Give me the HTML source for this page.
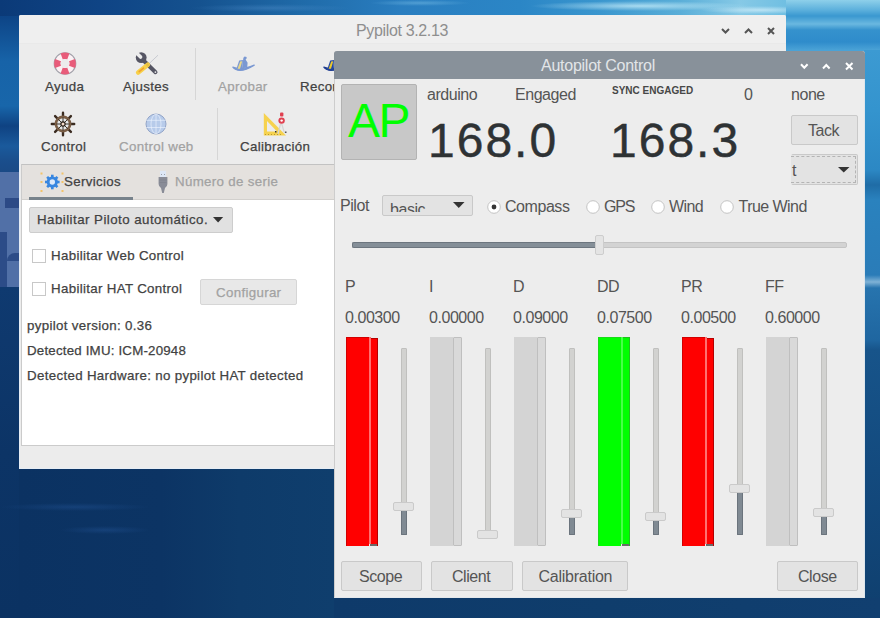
<!DOCTYPE html>
<html><head><meta charset="utf-8">
<style>
html,body{margin:0;padding:0;}
body{width:880px;height:618px;overflow:hidden;position:relative;font-family:"Liberation Sans",sans-serif;
background:#0e3868;}
.a{position:absolute;}
.t{position:absolute;white-space:nowrap;line-height:1;}
.bt{font-size:13.3px;letter-spacing:0.33px;color:#424242;-webkit-text-stroke:0.25px currentColor;}
.ft{font-size:16px;letter-spacing:-0.45px;color:#555555;}
.gray{color:#a2a2a2;}
svg{position:absolute;overflow:visible;}
.btn{position:absolute;box-sizing:border-box;border:1px solid #c9c9c9;background:#e3e3e3;border-radius:2px;}
</style></head><body>

<!-- background wallpaper -->
<div class="a" style="left:0;top:0;width:880px;height:618px;background:linear-gradient(180deg,#0f4078 0px,#113f74 300px,#0d3566 470px,#0c3262 618px);"></div>
<div class="a" style="left:0;top:0;width:880px;height:16px;background:linear-gradient(90deg,#0b3a78 0px,#0f4485 100px,#15528f 200px,#1f6aa8 300px,#2a7ec0 400px,#2b86c6 520px,#3a96ce 600px,#5aaed8 680px,#86c9e6 740px,#70bfe2 786px,#4aa4d6 880px);"></div>
<div class="a" style="left:0;top:0;width:880px;height:16px;background:radial-gradient(ellipse 110px 5px at 640px 6px,rgba(200,238,250,0.75),rgba(200,238,250,0)),radial-gradient(ellipse 60px 4px at 760px 10px,rgba(230,248,255,0.6),rgba(230,248,255,0)),radial-gradient(ellipse 80px 4px at 270px 8px,rgba(90,150,210,0.35),rgba(90,150,210,0)),radial-gradient(ellipse 50px 3px at 420px 3px,rgba(120,190,230,0.5),rgba(120,190,230,0));"></div>
<div class="a" style="left:786px;top:0;width:94px;height:52px;background:linear-gradient(180deg,#8ed0ea 0px,#5cb0dc 10px,#3a98d0 16px,#6ab8e0 24px,#3592cd 30px,#2f8ccb 42px,#4aa2d6 50px);"></div>
<div class="a" style="left:864px;top:50px;width:16px;height:568px;background:linear-gradient(180deg,#3c9ad2 0px,#3494ce 60px,#2c88c4 120px,#1f6ca6 135px,#2a82be 150px,#2a7cb8 225px,#7fb2d6 232px,#2774ae 238px,#1f66a0 290px,#17548a 300px,#134a7e 420px,#0f3f6e 568px);"></div>
<div class="a" style="left:0;top:16px;width:19px;height:602px;background:linear-gradient(180deg,#0d4486 0px,#1763a8 45px,#1866aa 90px,#0f4282 110px,#1a5a9c 130px,#1a4e8c 145px,#1a4a86 156px,#1a4a86 600px);"></div>
<div class="a" style="left:0;top:172px;width:19px;height:115px;background:#5170a7;"></div>
<div class="a" style="left:5px;top:198px;width:14px;height:10px;background:#2c4a86;"></div>
<div class="a" style="left:0;top:232px;width:7px;height:55px;background:#2c4c88;"></div>
<div class="a" style="left:7px;top:253px;width:12px;height:8px;background:#2c4c88;border-radius:8px 0 0 0;"></div>
<div class="a" style="left:0;top:287px;width:19px;height:331px;background:linear-gradient(180deg,#0f3a70 0%,#0c3466 50%,#0b3262 100%);"></div>
<div class="a" style="left:19px;top:468px;width:315px;height:150px;background:linear-gradient(90deg,#0b3262 0%,#0c3464 45%,#0e3b6a 70%,#0f3e6d 100%);"></div>
<div class="a" style="left:0;top:503px;width:150px;height:8px;background:radial-gradient(ellipse 75px 4px at 75px 4px,rgba(40,90,160,0.35),rgba(40,90,160,0));"></div>
<div class="a" style="left:60px;top:526px;width:90px;height:8px;background:radial-gradient(ellipse 45px 4px at 45px 4px,rgba(40,90,160,0.35),rgba(40,90,160,0));"></div>
<div class="a" style="left:334px;top:598px;width:546px;height:20px;background:linear-gradient(90deg,#0e3a6a 0%,#0f3d6c 50%,#113f70 100%);"></div>

<!-- ================= BACK WINDOW ================= -->
<div class="a" id="bw" style="left:19px;top:15px;width:767px;height:454px;box-sizing:border-box;background:#ececec;border-left:1px solid #e6edf5;border-bottom:1px solid #e6edf5;border-radius:2px 2px 0 0;"></div>
<div class="a" style="left:19px;top:15px;width:767px;height:28px;background:#efefef;border-radius:2px 2px 0 0;"></div>
<div class="a" style="left:19px;top:43px;width:767px;height:1px;background:#e9e9e9;"></div>
<div class="t" style="left:356px;top:22.5px;font-size:16px;letter-spacing:-0.35px;color:#8e8e8e;">Pypilot 3.2.13</div>
<!-- back title buttons -->
<svg style="left:721px;top:28px" width="9" height="6"><path d="M1 1 L4.5 4.5 L8 1" fill="none" stroke="#555" stroke-width="2"/></svg>
<svg style="left:744px;top:28px" width="9" height="6"><path d="M1 5 L4.5 1.5 L8 5" fill="none" stroke="#555" stroke-width="2"/></svg>
<svg style="left:767px;top:27px" width="8" height="8"><path d="M1 1 L7 7 M7 1 L1 7" fill="none" stroke="#555" stroke-width="2"/></svg>

<!-- toolbar row 1 -->
<svg style="left:53px;top:51px" width="24" height="25" viewBox="0 0 24 25">
 <circle cx="12" cy="12.5" r="10.8" fill="#fcf1f4" stroke="#a2a2aa" stroke-width="1.1"/>
 <g fill="#e85c7a">
  <path d="M7.6 2.6 A10.6 10.6 0 0 1 16.4 2.6 L14.2 8.5 A4.6 4.6 0 0 0 9.8 8.5 Z"/>
  <path d="M21.9 8.1 A10.6 10.6 0 0 1 21.9 16.9 L16 14.7 A4.6 4.6 0 0 0 16 10.3 Z"/>
  <path d="M16.4 22.4 A10.6 10.6 0 0 1 7.6 22.4 L9.8 16.5 A4.6 4.6 0 0 0 14.2 16.5 Z"/>
  <path d="M2.1 16.9 A10.6 10.6 0 0 1 2.1 8.1 L8 10.3 A4.6 4.6 0 0 0 8 14.7 Z"/>
 </g>
 <circle cx="12" cy="12.5" r="4.4" fill="#ececec"/>
</svg>
<div class="t bt" style="left:45px;top:80px;">Ayuda</div>

<svg style="left:135px;top:52px" width="24" height="23" viewBox="0 0 24 23">
 <path d="M13.4 12.3 L23 3.2" stroke="#c4c6ce" stroke-width="0.9"/>
 <path d="M8 8 L20.5 20.2" stroke="#555563" stroke-width="4" stroke-linecap="round"/>
 <circle cx="6.2" cy="5.6" r="5.4" fill="#555563"/>
 <path d="M5.6 5 L1 0.4" stroke="#ececec" stroke-width="3.6" stroke-linecap="round"/>
 <circle cx="20.4" cy="20.1" r="0.9" fill="#ececec"/>
 <path d="M3.2 20.5 L12.8 12.8" stroke="#f8d048" stroke-width="4.6" stroke-linecap="round"/>
 <path d="M4.2 19.6 L8.5 16.2" stroke="#f0a030" stroke-width="1.6" stroke-linecap="round"/>
 <path d="M11.5 13.8 L13.6 12" stroke="#e8c040" stroke-width="3"/>
</svg>
<div class="t bt" style="left:123px;top:80px;">Ajustes</div>

<div class="a" style="left:195px;top:48px;width:1px;height:52px;background:#d6d6d6;"></div>

<svg style="left:232px;top:55.5px" width="23" height="17" viewBox="0 0 23 17">
 <path d="M0.8 11.2 Q7 18.5 22.2 9.2 Q9 14.8 0.8 11.2 Z" fill="#7a98d2" stroke="#7a98d2" stroke-width="1.3" stroke-linejoin="round"/>
 <path d="M4.2 13.4 L7.2 4.6 L11 4 L10.2 13 Z" fill="#7a98d2"/>
 <path d="M5.6 12.8 L8.2 5.4 L10.2 5.3 L8 12.8 Z" fill="#ead88a"/>
 <path d="M10 12.5 L11 5 L11.4 1.8 L12.6 0.6 L14.6 1 L14.6 2.6 L13.6 3.6 L15.6 6.8 L15.2 11.2 Z" fill="#7a98d2"/>
</svg>
<div class="t bt gray" style="left:218px;top:80px;">Aprobar</div>

<svg style="left:322.5px;top:55.5px" width="23" height="17" viewBox="0 0 23 17">
 <path d="M0.8 11.2 Q7 18.5 22.2 9.2 Q9 14.8 0.8 11.2 Z" fill="#2448a0" stroke="#1e3c90" stroke-width="1.3" stroke-linejoin="round"/>
 <path d="M4.2 13.4 L7.2 4.6 L11 4 L10.2 13 Z" fill="#2448a0"/>
 <path d="M5.6 12.8 L8.2 5.4 L10.2 5.3 L8 12.8 Z" fill="#ecc82c"/>
 <path d="M10 12.5 L11 5 L11.4 1.8 L12.6 0.6 L14.6 1 L14.6 2.6 L13.6 3.6 L15.6 6.8 L15.2 11.2 Z" fill="#2a52aa"/>
</svg>
<div class="t bt" style="left:300px;top:80px;">Recordar</div>

<!-- toolbar row 2 -->
<svg style="left:51px;top:112px" width="24" height="24" viewBox="0 0 24 24">
 <g stroke="#3a2b20" stroke-width="2.4" stroke-linecap="round">
  <path d="M12 0.8 L12 4 M12 20 L12 23.2 M0.8 12 L4 12 M20 12 L23.2 12 M4.1 4.1 L6.3 6.3 M17.7 17.7 L19.9 19.9 M19.9 4.1 L17.7 6.3 M6.3 17.7 L4.1 19.9"/>
 </g>
 <circle cx="12" cy="12" r="7.1" fill="#e4e8ea" stroke="#7a5e46" stroke-width="2.6"/>
 <g stroke="#2a2118" stroke-width="0.9"><path d="M12 5.5 L12 18.5 M5.5 12 L18.5 12 M7.4 7.4 L16.6 16.6 M16.6 7.4 L7.4 16.6"/></g>
 <circle cx="12" cy="12" r="2.1" fill="#f4dccc" stroke="#2a2118" stroke-width="1.2"/>
</svg>
<div class="t bt" style="left:41px;top:140px;">Control</div>

<svg style="left:145px;top:113px" width="22" height="22" viewBox="0 0 22 22">
 <circle cx="11" cy="11" r="10" fill="#b7cbea" stroke="#93a5c8" stroke-width="1"/>
 <g stroke="#eef4ff" stroke-opacity="0.8" stroke-width="0.8" fill="none">
  <path d="M1.2 7.3 L20.8 7.3 M1.2 14.5 L20.8 14.5"/>
  <ellipse cx="11" cy="11" rx="5" ry="9.8"/>
  <path d="M11 1 L11 21"/>
 </g>
</svg>
<div class="t bt gray" style="left:119px;top:140px;">Control web</div>

<div class="a" style="left:217px;top:108px;width:1px;height:52px;background:#d6d6d6;"></div>

<svg style="left:263px;top:112px" width="24" height="24" viewBox="0 0 24 24">
 <path d="M0.8 1 L0.8 23.5 L23 23.5 Z" fill="#f6d24e"/>
 <path d="M4 9 L4 19.5 L14 19.5 Z" fill="#ececec"/>
 <g fill="#b89a30"><rect x="2" y="22" width="1" height="1"/><rect x="5" y="22" width="1" height="1"/><rect x="8" y="22" width="1" height="1"/><rect x="11" y="22" width="1" height="1"/><rect x="14" y="22" width="1" height="1"/><rect x="17" y="22" width="1" height="1"/></g>
 <path d="M17.6 11.5 L15 22 M18.6 11.5 L21.5 21" stroke="#d4d4d4" stroke-width="1.2"/>
 <rect x="17" y="0.5" width="3.4" height="4" rx="1" fill="#e04050"/>
 <circle cx="18.6" cy="8.6" r="3.2" fill="#e04050"/>
 <circle cx="18.6" cy="8.6" r="1.2" fill="#fff"/>
 <rect x="12" y="19" width="1.5" height="1.5" fill="#333"/>
 <rect x="22" y="19.5" width="1.5" height="1.5" fill="#555"/>
</svg>
<div class="t bt" style="left:240px;top:140px;">Calibración</div>

<!-- notebook -->
<div class="a" style="left:21px;top:164px;width:320px;height:282px;box-sizing:border-box;border:1px solid #cbcbcb;border-top-color:#c2c2c2;background:#fff;"></div>
<div class="a" style="left:22px;top:165px;width:320px;height:34px;background:#e4e1de;border-bottom:1px solid #d2d0cd;"></div>
<div class="a" style="left:29px;top:197px;width:104px;height:3px;background:#77828b;"></div>
<svg style="left:40px;top:171px" width="24" height="22" viewBox="0 0 24 22">
 <g fill="#f2c36a"><rect x="0.5" y="1.5" width="2" height="2"/><rect x="21.5" y="1.5" width="2" height="2"/><rect x="0.5" y="10" width="2" height="2"/><rect x="21.5" y="10" width="2" height="2"/><rect x="0.5" y="19" width="2" height="2"/><rect x="21.5" y="19" width="2" height="2"/></g>
 <g transform="translate(12.3 11)">
  <g fill="#3786e0">
   <circle r="5.6"/>
   <rect x="-1.3" y="-7.3" width="2.6" height="3"/>
   <rect x="-1.3" y="4.3" width="2.6" height="3"/>
   <rect x="-7.3" y="-1.3" width="3" height="2.6"/>
   <rect x="4.3" y="-1.3" width="3" height="2.6"/>
   <g transform="rotate(45)"><rect x="-1.3" y="-7.3" width="2.6" height="3"/><rect x="-1.3" y="4.3" width="2.6" height="3"/><rect x="-7.3" y="-1.3" width="3" height="2.6"/><rect x="4.3" y="-1.3" width="3" height="2.6"/></g>
  </g>
  <circle r="2.7" fill="#dce9fa"/>
 </g>
</svg>
<div class="t bt" style="left:64px;top:175px;">Servicios</div>
<svg style="left:158px;top:170px" width="10" height="24" viewBox="0 0 10 24">
 <rect x="2" y="0.8" width="6" height="6.2" fill="#dde7f6"/>
 <rect x="3" y="4" width="1" height="1" fill="#9aa0aa"/><rect x="6" y="4" width="1" height="1" fill="#9aa0aa"/>
 <path d="M0.6 7 L9.4 7 L9.4 14 Q9.4 16.5 7 18 L5.8 23 L4.2 23 L3 18 Q0.6 16.5 0.6 14 Z" fill="#898c97"/>
 <path d="M1.5 10 L8.5 10 M1.5 12.5 L8.5 12.5" stroke="#7c7f8a" stroke-width="0.6"/>
</svg>
<div class="t bt gray" style="left:175px;top:175px;">Número de serie</div>

<div class="btn" style="left:29px;top:207px;width:204px;height:26px;border-color:#cdcdcd;background:#e1e1e1;"></div>
<div class="t bt" style="left:37px;top:213px;letter-spacing:0.46px;">Habilitar Piloto automático.</div>
<svg style="left:213.4px;top:216.8px" width="11" height="7"><path d="M0 0 L10.2 0 L5.1 5.6 Z" fill="#333"/></svg>

<div class="a" style="left:32px;top:249px;width:14px;height:14px;box-sizing:border-box;border:1px solid #c8c8c8;background:#fff;"></div>
<div class="t bt" style="left:51px;top:249px;">Habilitar Web Control</div>
<div class="a" style="left:32px;top:282px;width:14px;height:14px;box-sizing:border-box;border:1px solid #c8c8c8;background:#fff;"></div>
<div class="t bt" style="left:51px;top:282px;">Habilitar HAT Control</div>
<div class="btn" style="left:200px;top:279px;width:97px;height:26px;border-color:#d6d6d6;background:#e8e8e8;"></div>
<div class="t bt gray" style="left:216px;top:286px;">Configurar</div>

<div class="t bt" style="left:27px;top:318.5px;">pypilot version: 0.36</div>
<div class="t bt" style="left:27px;top:343.5px;letter-spacing:0.2px;">Detected IMU: ICM-20948</div>
<div class="t bt" style="left:27px;top:369px;">Detected Hardware: no pypilot HAT detected</div>

<!-- ================= FRONT WINDOW ================= -->
<div class="a" id="fw" style="left:334px;top:51px;width:531px;height:547px;box-sizing:border-box;background:#ededed;border-left:1px solid #cdcdcd;border-right:1px solid #dde6ec;border-bottom:1px solid #e4e8ec;border-radius:3px 3px 0 0;"></div>
<div class="a" style="left:334px;top:51px;width:531px;height:28px;background:#88919a;border-radius:3px 3px 0 0;"></div>
<div class="t" style="left:541px;top:58px;font-size:16px;letter-spacing:-0.25px;color:#e2e5e8;">Autopilot Control</div>
<svg style="left:800px;top:63px" width="9" height="7"><path d="M1 1.2 L4.3 4.8 L7.6 1.2" fill="none" stroke="#fff" stroke-width="2"/></svg>
<svg style="left:822px;top:63px" width="9" height="7"><path d="M1 5.5 L4.3 2 L7.6 5.5" fill="none" stroke="#fff" stroke-width="2"/></svg>
<svg style="left:845px;top:62px" width="9" height="8"><path d="M1 1 L7.5 7.5 M7.5 1 L1 7.5" fill="none" stroke="#fff" stroke-width="2"/></svg>

<div class="a" style="left:341px;top:84px;width:76px;height:75.5px;box-sizing:border-box;border:1px solid #b3b3b3;background:#c8c8c8;border-radius:2px;"></div>
<div class="t" style="left:348px;top:96.5px;font-size:48px;letter-spacing:-1.5px;color:#00ff00;">AP</div>

<div class="t ft" style="left:427px;top:86.5px;">arduino</div>
<div class="t ft" style="left:515px;top:86.5px;">Engaged</div>
<div class="t" style="left:612px;top:86px;font-size:10px;font-weight:bold;color:#474747;">SYNC ENGAGED</div>
<div class="t ft" style="left:744px;top:87px;">0</div>
<div class="t ft" style="left:791px;top:87px;">none</div>

<div class="t" style="left:428px;top:117px;font-size:48px;letter-spacing:2px;color:#2e3234;-webkit-text-stroke:0.45px #2e3234;">168.0</div>
<div class="t" style="left:610px;top:117px;font-size:48px;letter-spacing:2px;color:#2e3234;-webkit-text-stroke:0.45px #2e3234;">168.3</div>

<div class="btn" style="left:791px;top:115px;width:67px;height:30px;"></div>
<div class="t ft" style="left:808px;top:122.5px;">Tack</div>
<div class="btn" style="left:791px;top:154px;width:67px;height:31px;border-left-color:#e3e3e3;"></div><div class="a" style="left:791px;top:156px;width:65px;height:27px;box-sizing:border-box;border-top:1px dashed #b4b4b4;border-bottom:1px dashed #b4b4b4;border-right:1px dashed #b4b4b4;"></div>
<div class="t ft" style="left:792px;top:163px;">t</div>
<svg style="left:838px;top:167px" width="12" height="6"><path d="M0 0 L11.5 0 L5.75 5.5 Z" fill="#333"/></svg>

<div class="t ft" style="left:340px;top:198px;">Pilot</div>
<div class="btn" style="left:382px;top:194.5px;width:91px;height:21px;"></div><div class="a" style="left:383px;top:196px;width:70px;height:16px;overflow:hidden;"><div class="t ft" style="left:7px;top:5.5px;">basic</div></div>
<svg style="left:453px;top:202px" width="12" height="7"><path d="M0 0 L11.5 0 L5.75 6 Z" fill="#333"/></svg>

<svg style="left:487px;top:200px" width="14" height="14"><circle cx="7" cy="7" r="6.3" fill="#fff" stroke="#c4c4c4" stroke-width="1"/><circle cx="7" cy="7" r="2.4" fill="#333"/></svg>
<div class="t ft" style="left:505px;top:199.4px;">Compass</div>
<svg style="left:586px;top:200px" width="14" height="14"><circle cx="7" cy="7" r="6.3" fill="#fff" stroke="#c4c4c4" stroke-width="1"/></svg>
<div class="t ft" style="left:604px;top:199.4px;letter-spacing:-1.2px;">GPS</div>
<svg style="left:651px;top:200px" width="14" height="14"><circle cx="7" cy="7" r="6.3" fill="#fff" stroke="#c4c4c4" stroke-width="1"/></svg>
<div class="t ft" style="left:669px;top:199.4px;letter-spacing:-0.6px;">Wind</div>
<svg style="left:720px;top:200px" width="14" height="14"><circle cx="7" cy="7" r="6.3" fill="#fff" stroke="#c4c4c4" stroke-width="1"/></svg>
<div class="t ft" style="left:738.5px;top:199.4px;letter-spacing:-0.55px;">True Wind</div>

<!-- heading slider -->
<div class="a" style="left:352px;top:242px;width:495px;height:6px;box-sizing:border-box;background:#d3d3d3;border:1px solid #c4c4c4;border-radius:2px;"></div>
<div class="a" style="left:352px;top:242px;width:244px;height:6px;box-sizing:border-box;background:#858f98;border:1px solid #6d767f;border-right:none;border-radius:2px 0 0 2px;"></div>
<div class="a" style="left:594.5px;top:235px;width:9.5px;height:20px;box-sizing:border-box;background:#e4e4e4;border:1px solid #cdcdcd;border-radius:2px;"></div>

<!--G-->
<div class="t ft" style="left:345px;top:279px;">P</div>
<div class="t ft" style="left:345px;top:309.8px;">0.00300</div>
<div class="a" style="left:346px;top:337px;width:23px;height:209px;box-sizing:border-box;background:#ff0000;border-top:1px solid #d20000;border-left:1px solid #d20000;"></div>
<div class="a" style="left:369px;top:337px;width:1.5px;height:207px;background:#ff7070;"></div>
<div class="a" style="left:370.5px;top:338px;width:7.2px;height:208px;box-sizing:border-box;background:#ff0000;border-top:1px solid #b40000;border-right:1px solid #b40000;"></div>
<div class="a" style="left:370px;top:544px;width:7px;height:2px;background:#6a6a6a;"></div>
<div class="a" style="left:401px;top:348px;width:6px;height:187px;box-sizing:border-box;background:#d2d2d0;border:1px solid #c0c0be;border-radius:1px;"></div>
<div class="a" style="left:401px;top:507px;width:6px;height:28px;box-sizing:border-box;background:#808a93;border:1px solid #6b747d;border-top:none;border-radius:0 0 1px 1px;"></div>
<div class="a" style="left:393px;top:502px;width:21px;height:9px;box-sizing:border-box;background:#e3e3e3;border:1px solid #cacaca;border-radius:2px;"></div>
<div class="t ft" style="left:429px;top:279px;">I</div>
<div class="t ft" style="left:429px;top:309.8px;">0.00000</div>
<div class="a" style="left:430px;top:337px;width:23px;height:209px;background:#d4d4d4;"></div>
<div class="a" style="left:453px;top:337px;width:9px;height:209px;box-sizing:border-box;background:#d9d9d9;border:1px solid #bfbfbf;border-radius:1px;"></div>
<div class="a" style="left:485px;top:348px;width:6px;height:187px;box-sizing:border-box;background:#d2d2d0;border:1px solid #c0c0be;border-radius:1px;"></div>
<div class="a" style="left:485px;top:535px;width:6px;height:0px;box-sizing:border-box;background:#808a93;border:1px solid #6b747d;border-top:none;border-radius:0 0 1px 1px;"></div>
<div class="a" style="left:477px;top:530px;width:21px;height:9px;box-sizing:border-box;background:#e3e3e3;border:1px solid #cacaca;border-radius:2px;"></div>
<div class="t ft" style="left:513px;top:279px;">D</div>
<div class="t ft" style="left:513px;top:309.8px;">0.09000</div>
<div class="a" style="left:514px;top:337px;width:23px;height:209px;background:#d4d4d4;"></div>
<div class="a" style="left:537px;top:337px;width:9px;height:209px;box-sizing:border-box;background:#d9d9d9;border:1px solid #bfbfbf;border-radius:1px;"></div>
<div class="a" style="left:569px;top:348px;width:6px;height:187px;box-sizing:border-box;background:#d2d2d0;border:1px solid #c0c0be;border-radius:1px;"></div>
<div class="a" style="left:569px;top:514px;width:6px;height:21px;box-sizing:border-box;background:#808a93;border:1px solid #6b747d;border-top:none;border-radius:0 0 1px 1px;"></div>
<div class="a" style="left:561px;top:509px;width:21px;height:9px;box-sizing:border-box;background:#e3e3e3;border:1px solid #cacaca;border-radius:2px;"></div>
<div class="t ft" style="left:597px;top:279px;">DD</div>
<div class="t ft" style="left:597px;top:309.8px;">0.07500</div>
<div class="a" style="left:598px;top:337px;width:23px;height:209px;box-sizing:border-box;background:#00ff00;border-top:1px solid #18dc18;border-left:1px solid #18dc18;"></div>
<div class="a" style="left:621px;top:337px;width:1.5px;height:207px;background:#48ff48;"></div>
<div class="a" style="left:622.5px;top:337px;width:7.2px;height:209px;box-sizing:border-box;background:#00ff00;border-top:1px solid #20c020;border-right:1px solid #20c020;"></div>
<div class="a" style="left:622px;top:544px;width:7px;height:2px;background:#6a6a6a;"></div>
<div class="a" style="left:653px;top:348px;width:6px;height:187px;box-sizing:border-box;background:#d2d2d0;border:1px solid #c0c0be;border-radius:1px;"></div>
<div class="a" style="left:653px;top:517px;width:6px;height:18px;box-sizing:border-box;background:#808a93;border:1px solid #6b747d;border-top:none;border-radius:0 0 1px 1px;"></div>
<div class="a" style="left:645px;top:512px;width:21px;height:9px;box-sizing:border-box;background:#e3e3e3;border:1px solid #cacaca;border-radius:2px;"></div>
<div class="t ft" style="left:681px;top:279px;">PR</div>
<div class="t ft" style="left:681px;top:309.8px;">0.00500</div>
<div class="a" style="left:682px;top:337px;width:23px;height:209px;box-sizing:border-box;background:#ff0000;border-top:1px solid #d20000;border-left:1px solid #d20000;"></div>
<div class="a" style="left:705px;top:337px;width:1.5px;height:207px;background:#ff7070;"></div>
<div class="a" style="left:706.5px;top:338px;width:7.2px;height:208px;box-sizing:border-box;background:#ff0000;border-top:1px solid #b40000;border-right:1px solid #b40000;"></div>
<div class="a" style="left:706px;top:544px;width:7px;height:2px;background:#6a6a6a;"></div>
<div class="a" style="left:737px;top:348px;width:6px;height:187px;box-sizing:border-box;background:#d2d2d0;border:1px solid #c0c0be;border-radius:1px;"></div>
<div class="a" style="left:737px;top:489px;width:6px;height:46px;box-sizing:border-box;background:#808a93;border:1px solid #6b747d;border-top:none;border-radius:0 0 1px 1px;"></div>
<div class="a" style="left:729px;top:484px;width:21px;height:9px;box-sizing:border-box;background:#e3e3e3;border:1px solid #cacaca;border-radius:2px;"></div>
<div class="t ft" style="left:765px;top:279px;">FF</div>
<div class="t ft" style="left:765px;top:309.8px;">0.60000</div>
<div class="a" style="left:766px;top:337px;width:23px;height:209px;background:#d4d4d4;"></div>
<div class="a" style="left:789px;top:337px;width:9px;height:209px;box-sizing:border-box;background:#d9d9d9;border:1px solid #bfbfbf;border-radius:1px;"></div>
<div class="a" style="left:821px;top:348px;width:6px;height:187px;box-sizing:border-box;background:#d2d2d0;border:1px solid #c0c0be;border-radius:1px;"></div>
<div class="a" style="left:821px;top:513px;width:6px;height:22px;box-sizing:border-box;background:#808a93;border:1px solid #6b747d;border-top:none;border-radius:0 0 1px 1px;"></div>
<div class="a" style="left:813px;top:508px;width:21px;height:9px;box-sizing:border-box;background:#e3e3e3;border:1px solid #cacaca;border-radius:2px;"></div>
<!--/G-->

<!-- bottom buttons -->
<div class="btn" style="left:341px;top:561px;width:81px;height:30px;"></div>
<div class="t ft" style="left:359px;top:568.5px;">Scope</div>
<div class="btn" style="left:431px;top:561px;width:82px;height:30px;"></div>
<div class="t ft" style="left:452px;top:568.5px;">Client</div>
<div class="btn" style="left:522px;top:561px;width:106px;height:30px;"></div>
<div class="t ft" style="left:538.5px;top:568.5px;letter-spacing:-0.25px;">Calibration</div>
<div class="btn" style="left:777px;top:561px;width:81px;height:30px;"></div>
<div class="t ft" style="left:798px;top:568.5px;">Close</div>

</body></html>
